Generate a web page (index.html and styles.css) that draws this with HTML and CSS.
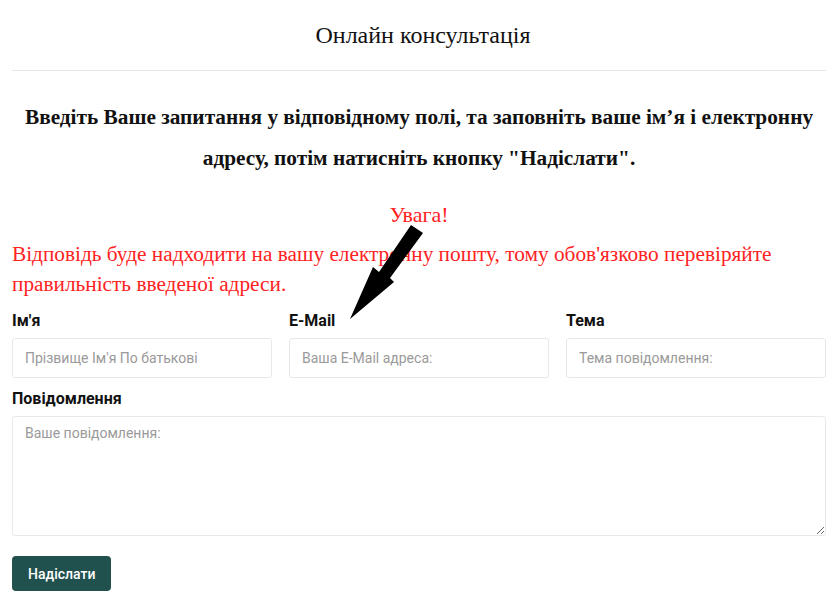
FILE: index.html
```html
<!DOCTYPE html>
<html lang="uk">
<head>
    <meta charset="UTF-8">
    <meta name="viewport" content="width=device-width, initial-scale=1.0">
    <title>Онлайн консультація</title>
    <link rel="stylesheet" href="styles.css">
</head>
<body>
    <div class="page">
        <h1 class="title">Онлайн консультація</h1>

        <p class="intro">Введіть Ваше запитання у відповідному полі, та заповніть ваше ім’я і електронну адресу, потім натисніть кнопку "Надіслати".</p>

        <div class="warning">
            <div class="warning-title">Увага!</div>
            <p class="warning-text">Відповідь буде надходити на вашу електронну пошту, тому обов'язково перевіряйте правильність введеної адреси.</p>
        </div>

        <!-- стрілка до поля E-Mail -->
        <svg class="arrow" width="90" height="105" viewBox="0 0 90 105">
            <polygon points="71,5 83,13 50,58 54,62 10,99 33,47 39,52" fill="#000"/>
        </svg>

        <form class="form" onsubmit="return false">
            <div class="row">
                <div class="field">
                    <label>Ім'я</label>
                    <input type="text" placeholder="Прізвище Ім'я По батькові">
                </div>
                <div class="field">
                    <label>E-Mail</label>
                    <input type="text" placeholder="Ваша E-Mail адреса:">
                </div>
                <div class="field">
                    <label>Тема</label>
                    <input type="text" placeholder="Тема повідомлення:">
                </div>
            </div>
            <div class="field">
                <label>Повідомлення</label>
                <textarea placeholder="Ваше повідомлення:"></textarea>
            </div>
            <button type="submit">Надіслати</button>
        </form>
    </div>
</body>
</html>
```

FILE: styles.css
```css
body {
    margin: 0;
    background: #fff;
    color: #111;
    font-family: "Liberation Serif", "Times New Roman", serif;
}

.page {
    position: relative;
    padding: 0 12px;
}

.title {
    margin: 0;
    padding: 20px 0 20px 8px;
    font-size: 24px;
    font-weight: normal;
    line-height: 30px;
    text-align: center;
    border-bottom: 1px solid #e6e6e6;
}

.intro {
    margin: 26px 0 0;
    font-size: 21.3px;
    font-weight: bold;
    line-height: 41px;
    text-align: center;
}

.warning {
    color: #f22;
}

.warning-title {
    margin-top: 24px;
    font-size: 22px;
    line-height: 24px;
    text-align: center;
}

.warning-text {
    margin: 12px 0 0;
    font-size: 21.3px;
    line-height: 30px;
}

.arrow {
    position: absolute;
    left: 340px;
    top: 220px;
}

.form {
    margin-top: 12px;
    font-family: Roboto, "Liberation Sans", Arial, sans-serif;
}

.row {
    display: grid;
    grid-template-columns: repeat(3, 1fr);
    gap: 17px;
}

.field {
    margin-bottom: 11px;
}

.field label {
    display: block;
    margin-bottom: 8px;
    font-size: 16px;
    font-weight: bold;
    line-height: 19px;
}

input,
textarea {
    display: block;
    box-sizing: border-box;
    width: 100%;
    border: 1px solid #e8e8e8;
    border-radius: 3px;
    font-family: inherit;
    font-size: 14px;
    color: #333;
    outline: none;
}

input {
    height: 40px;
    padding: 0 12px;
}

textarea {
    height: 120px;
    padding: 6px 12px;
    line-height: 20px;
}

input::placeholder,
textarea::placeholder {
    color: #9a9a9a;
}

button {
    margin-top: 9px;
    height: 35px;
    padding: 0 16px;
    border: none;
    border-radius: 4px;
    background: #21514f;
    color: #fff;
    font-family: inherit;
    font-size: 14px;
    font-weight: 500;
    cursor: pointer;
}
```
